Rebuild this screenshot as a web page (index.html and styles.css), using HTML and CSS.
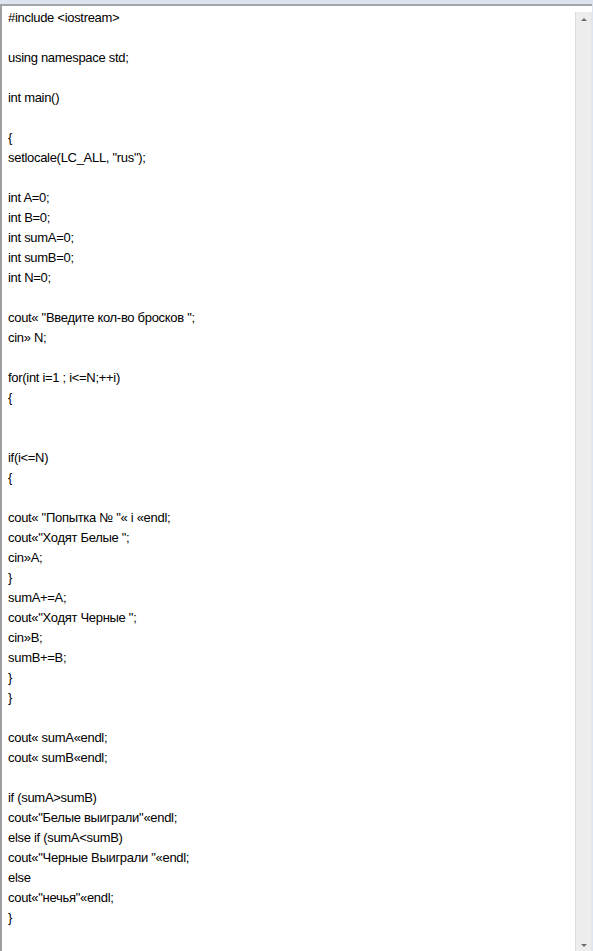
FILE: index.html
```html
<!DOCTYPE html>
<html lang="ru">

<head>
    <meta charset="UTF-8">
    <meta name="viewport" content="width=device-width, initial-scale=1.0">
    <title>Code</title>
    <link rel="stylesheet" href="styles.css">
</head>

<body>
    <div class="top-strip"></div>

    <main class="editor">

        <div class="code">
            <p>#include &lt;iostream&gt;</p>
            <p>&nbsp;</p>
            <p>using namespace std;</p>
            <p>&nbsp;</p>
            <p>int main()</p>
            <p>&nbsp;</p>
            <p>{</p>
            <p>setlocale(LC_ALL, "rus");</p>
            <p>&nbsp;</p>
            <p>int A=0;</p>
            <p>int B=0;</p>
            <p>int sumA=0;</p>
            <p>int sumB=0;</p>
            <p>int N=0;</p>
            <p>&nbsp;</p>
            <p>cout« "Введите кол-во бросков ";</p>
            <p>cin» N;</p>
            <p>&nbsp;</p>
            <p>for(int i=1 ; i&lt;=N;++i)</p>
            <p>{</p>
            <p>&nbsp;</p>
            <p>&nbsp;</p>
            <p>if(i&lt;=N)</p>
            <p>{</p>
            <p>&nbsp;</p>
            <p>cout« "Попытка № "« i «endl;</p>
            <p>cout«"Ходят Белые ";</p>
            <p>cin»A;</p>
            <p>}</p>
            <p>sumA+=A;</p>
            <p>cout«"Ходят Черные ";</p>
            <p>cin»B;</p>
            <p>sumB+=B;</p>
            <p>}</p>
            <p>}</p>
            <p>&nbsp;</p>
            <p>cout« sumA«endl;</p>
            <p>cout« sumB«endl;</p>
            <p>&nbsp;</p>
            <p>if (sumA&gt;sumB)</p>
            <p>cout«"Белые выиграли"«endl;</p>
            <p>else if (sumA&lt;sumB)</p>
            <p>cout«"Черные Выиграли "«endl;</p>
            <p>else</p>
            <p>cout«"нечья"«endl;</p>
            <p>}</p>
        </div>

        <div class="scrollbar">
            <span class="arrow up"></span>
            <span class="arrow down"></span>
        </div>

    </main>
</body>

</html>
```

FILE: styles.css
```css
* {
    margin: 0;
    padding: 0;
    box-sizing: border-box;
}

html,
body {
    height: 100%;
    overflow: hidden;
}

body {
    display: flex;
    flex-direction: column;
    background-color: #dfe5f1;
    font-family: "Liberation Sans", Arial, sans-serif;
}

.top-strip {
    height: 4px;
    background-color: #dde4f0;
}

.editor {
    flex: 1;
    display: flex;
    margin-right: 1px;
    background-color: white;
    border-top: 2px solid #a3a5a8;
    border-left: 2px solid #9d9fa2;
}

.code {
    flex: 1;
    padding: 2px 6px;
    font-size: 13px;
    line-height: 20px;
    letter-spacing: -0.3px;
    color: black;
}

.scrollbar {
    width: 17px;
    margin-top: 6px;
    display: flex;
    flex-direction: column;
    justify-content: space-between;
    align-items: center;
    padding: 6px 0 4px;
    background-color: #ededed;
    border-left: 1px solid #dadada;
    border-right: 1px solid #e6e6e6;
}

.arrow {
    width: 0;
    height: 0;
    border-left: 3px solid transparent;
    border-right: 3px solid transparent;
}

.arrow.up {
    border-bottom: 3px solid #6f6f6f;
}

.arrow.down {
    border-top: 3px solid #6f6f6f;
}
```
